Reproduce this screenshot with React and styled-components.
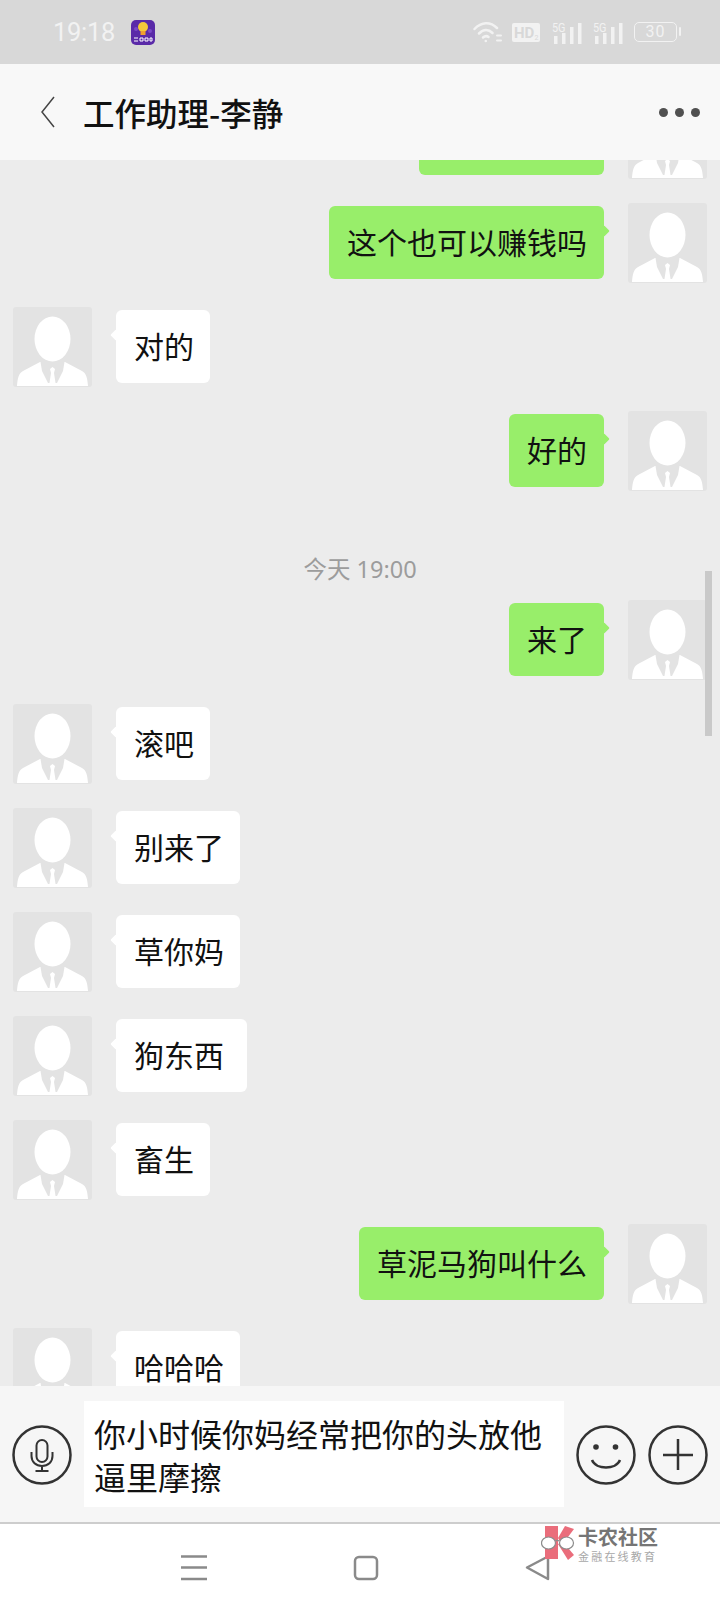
import React from "react";
import styled, { createGlobalStyle } from "styled-components";

const GlobalStyle = createGlobalStyle`
  html, body {
    margin: 0;
    padding: 0;
  }
  body {
    font-family: "Noto Sans CJK SC", "Noto Sans", sans-serif;
    color: #111;
  }
  * {
    box-sizing: border-box;
  }
`;

const Page = styled.div`
  width: 720px;
  height: 1612px;
  display: flex;
  flex-direction: column;
  overflow: hidden;
  background: #ececec;
`;

const StatusBar = styled.div`
  height: 64px;
  flex: none;
  display: flex;
  align-items: center;
  padding: 0 43px 0 53px;
  background: #d8d8d8;
  color: #f2f2f2;
`;

const Clock = styled.span`
  font-family: Roboto, sans-serif;
  font-size: 25.5px;
  letter-spacing: -0.3px;
  margin-right: 16px;
`;

const StatusIcons = styled.div`
  margin-left: auto;
  display: flex;
  align-items: center;
  gap: 10px;
`;

const Battery = styled.div`
  position: relative;
  width: 43px;
  height: 20px;
  border: 1.5px solid #f2f2f2;
  border-radius: 5px;
  font-family: Roboto, sans-serif;
  font-size: 16px;
  line-height: 17px;
  text-align: center;
  letter-spacing: 1px;

  &::after {
    content: "";
    position: absolute;
    right: -5px;
    top: 4px;
    width: 2px;
    height: 9px;
    border-radius: 1px;
    background: #f2f2f2;
  }
`;

const Header = styled.header`
  height: 96px;
  flex: none;
  display: flex;
  align-items: center;
  padding: 0 20px 0 40px;
  background: #f8f8f8;
  position: relative;
  z-index: 1;
`;

const Title = styled.h1`
  margin: 0 0 0 28px;
  font-size: 31.5px;
  font-weight: 500;
  color: #111;
`;

const Dots = styled.div`
  margin-left: auto;
  display: flex;
  gap: 7px;
`;

const Dot = styled.span`
  width: 9px;
  height: 9px;
  border-radius: 50%;
  background: #505050;
`;

const Chat = styled.main`
  flex: 1;
  min-height: 0;
  position: relative;
  overflow: hidden;
`;

const MessageList = styled.div`
  margin-top: -61px;
  display: flex;
  flex-direction: column;
`;

const Row = styled.div`
  display: flex;
  align-items: flex-start;
  justify-content: ${({ $mine }) => ($mine ? "flex-end" : "flex-start")};
  gap: 24px;
  padding: 0 13px;
  margin-bottom: 24px;
`;

const Avatar = styled.svg`
  width: 79px;
  height: 80px;
  flex: none;
  border-radius: 3px;
  background: #e3e3e3;
`;

const Bubble = styled.div`
  position: relative;
  margin-top: 3px;
  height: 73px;
  min-width: ${({ $minWidth }) => $minWidth || 0}px;
  padding: ${({ $mine }) => ($mine ? "0 17px 0 18px" : "0 16px 0 18px")};
  border-radius: 6px;
  font-size: 30px;
  line-height: 71px;
  white-space: nowrap;
  color: #111;
  background: ${({ $mine }) => ($mine ? "#98ee6a" : "#ffffff")};

  &::after {
    content: "";
    position: absolute;
    top: 21px;
    ${({ $mine }) => ($mine ? "right: -4px;" : "left: -4px;")}
    width: 8px;
    height: 8px;
    border-radius: 1px;
    transform: rotate(45deg);
    background: inherit;
  }
`;

const TimeLabel = styled.div`
  height: 85px;
  padding-top: 38px;
  font-size: 23.5px;
  line-height: 32px;
  text-align: center;
  color: #9c9c9c;
  font-family: "Noto Sans", "Noto Sans CJK SC", sans-serif;
`;

const Scrollbar = styled.div`
  position: absolute;
  top: 411px;
  right: 8px;
  width: 7px;
  height: 165px;
  background: #c9c9c9;
`;

const InputBar = styled.div`
  height: 138px;
  flex: none;
  display: flex;
  align-items: center;
  gap: 12px;
  padding: 2px 12px 0;
  background: #f6f6f6;
  border-bottom: 2px solid #cdcdcd;
  position: relative;
  z-index: 1;
`;

const RoundButton = styled.svg`
  width: 60px;
  height: 60px;
  flex: none;
  color: #333;
`;

const TextBox = styled.div`
  width: 480px;
  height: 106px;
  padding: 11px 10px 0;
  margin-top: -2px;
  background: #fff;
  font-size: 32px;
  line-height: 43px;
  color: #111;
`;

const NavBar = styled.nav`
  flex: none;
  height: 88px;
  position: relative;
  z-index: 1;
  display: grid;
  grid-template-columns: repeat(3, 172px);
  justify-content: center;
  justify-items: center;
  padding: 30px 0 0 12px;
  background: #fff;
`;

const NavIcon = styled.svg`
  width: 28px;
  height: 28px;
  color: #8a8a8a;
`;

const Watermark = styled.div`
  position: absolute;
  top: 1px;
  left: 541px;
  display: flex;
  align-items: flex-start;
  gap: 3px;
`;

const WatermarkText = styled.div`
  display: flex;
  flex-direction: column;
  padding-top: 1px;
`;

const WatermarkName = styled.span`
  font-size: 20px;
  line-height: 22px;
  font-weight: 700;
  letter-spacing: 0;
  color: #757575;
`;

const WatermarkSlogan = styled.span`
  margin-top: 1px;
  font-size: 11px;
  line-height: 14px;
  letter-spacing: 2.2px;
  color: #a8a8a8;
`;

const AvatarIcon = () => (
  <Avatar viewBox="0 0 79 80">
    <path fill="#fff" d="M4 79C4.500 71 6 66 10 64L27 55H52L69 64C73 66 74.500 71 75 79Z" />
    <path fill="#e3e3e3" d="M27 52L29 64L35 76H44L50 64L52 52Z" />
    <path fill="#fff" d="M37 62L39.500 60L42 62L41 66L43 79H36L38 66Z" />
    <ellipse fill="#fff" cx="39.500" cy="32" rx="18" ry="22.500" />
  </Avatar>
);

const Message = ({ mine, text, minWidth }) => (
  <Row $mine={mine}>
    {!mine && <AvatarIcon />}
    <Bubble $mine={mine} $minWidth={minWidth}>
      {text}
    </Bubble>
    {mine && <AvatarIcon />}
  </Row>
);

const AppBadge = () => (
  <svg width="24" height="25" viewBox="0 0 24 25">
    <rect width="24" height="25" rx="5" fill="#5a2aa8" />
    <circle cx="5" cy="9" r="2" fill="#7a48c8" />
    <circle cx="19" cy="11" r="2" fill="#7a48c8" />
    <circle cx="12" cy="7" r="5" fill="#f5c83a" />
    <rect x="9.500" y="11" width="5" height="4" fill="#f0a030" />
    <path d="M3 18h4M3 21h4M9 18h3v3H9zM14 18h3v3h-3zM19 18h2v3h-2z" stroke="#fff" strokeWidth="1" fill="none" />
  </svg>
);

const WifiIcon = () => (
  <svg width="29" height="22" viewBox="0 0 29 22" fill="none" stroke="#f2f2f2" strokeWidth="2.500" strokeLinecap="round">
    <path d="M1.500 8C8.500 0.500 17.500 0.500 24 7" />
    <path d="M6 12.500C10.500 8 15.500 8 19.500 12" />
    <path d="M10 16.500C12 14.800 14 14.800 15.500 16" />
    <circle cx="12.800" cy="20" r="1.300" fill="#f2f2f2" stroke="none" />
    <path d="M24 14.500h4M24 19.500h4" strokeWidth="2" />
  </svg>
);

const HdIcon = () => (
  <svg width="30" height="19" viewBox="0 0 30 19">
    <rect width="28" height="19" rx="2" fill="#f2f2f2" />
    <text x="2" y="15" fontSize="15" fontWeight="700" fontFamily="Roboto, sans-serif" fill="#d8d8d8">HD</text>
    <text x="22.500" y="17" fontSize="7" fontFamily="Roboto, sans-serif" fill="#d8d8d8">2</text>
  </svg>
);

const SignalIcon = () => (
  <svg width="31" height="23" viewBox="0 0 31 23">
    <text x="0" y="10.500" fontSize="13" fontFamily="Roboto, sans-serif" fill="#f2f2f2" textLength="13.500" lengthAdjust="spacingAndGlyphs">5G</text>
    <g fill="#f2f2f2">
      <rect x="2" y="15" width="3.500" height="8" />
      <rect x="10" y="12" width="3.500" height="11" />
      <rect x="18" y="6" width="3.500" height="17" />
      <rect x="26" y="2" width="3.500" height="21" />
    </g>
  </svg>
);

const WatermarkLogo = () => (
  <svg width="34" height="36" viewBox="0 0 34 36">
    <g fill="#ea6d7b">
      <path d="M4 1H17V34H4Z" />
      <path d="M17 13L24 1L33 4L21 20Z" />
      <path d="M17 19L22 17L33 30L27 35Z" />
    </g>
    <g fill="#fff" stroke="#8c8c8c" strokeWidth="1.200">
      <ellipse cx="7.500" cy="18" rx="7" ry="6" />
      <ellipse cx="25.500" cy="18" rx="7" ry="6" />
      <path d="M14.500 16C15.500 15 16.500 15 18.500 16" fill="none" />
    </g>
  </svg>
);

const messages = [
  { id: 1, mine: true, text: "", minWidth: 185 },
  { id: 2, mine: true, text: "这个也可以赚钱吗" },
  { id: 3, mine: false, text: "对的" },
  { id: 4, mine: true, text: "好的" },
  { id: 5, time: "今天 19:00" },
  { id: 6, mine: true, text: "来了" },
  { id: 7, mine: false, text: "滚吧" },
  { id: 8, mine: false, text: "别来了" },
  { id: 9, mine: false, text: "草你妈" },
  { id: 10, mine: false, text: "狗东西", minWidth: 131 },
  { id: 11, mine: false, text: "畜生" },
  { id: 12, mine: true, text: "草泥马狗叫什么" },
  { id: 13, mine: false, text: "哈哈哈" },
];

const App = () => (
  <Page>
    <GlobalStyle />
    <StatusBar>
      <Clock>19:18</Clock>
      <AppBadge />
      <StatusIcons>
        <WifiIcon />
        <HdIcon />
        <SignalIcon />
        <SignalIcon />
        <Battery>30</Battery>
      </StatusIcons>
    </StatusBar>
    <Header>
      <svg width="15" height="32" viewBox="0 0 15 32" fill="none" stroke="#444" strokeWidth="1.500">
        <path d="M14 1L2 16L14 31" />
      </svg>
      <Title>工作助理-李静</Title>
      <Dots>
        <Dot />
        <Dot />
        <Dot />
      </Dots>
    </Header>
    <Chat>
      <MessageList>
        {messages.map((m) =>
          m.time ? (
            <TimeLabel key={m.id}>{m.time}</TimeLabel>
          ) : (
            <Message key={m.id} mine={m.mine} text={m.text} minWidth={m.minWidth} />
          )
        )}
      </MessageList>
      <Scrollbar />
    </Chat>
    <InputBar>
      <RoundButton viewBox="0 0 60 60" fill="none" stroke="currentColor" strokeWidth="2.500">
        <circle cx="30" cy="30" r="28.500" />
        <rect x="24.500" y="15" width="11" height="22" rx="5.500" strokeWidth="2" />
        <path d="M19.500 27V31C19.500 37 24 41 30 41C36 41 40.500 37 40.500 31V27M30 41V46M23.500 46H36.500" strokeWidth="2" />
      </RoundButton>
      <TextBox>你小时候你妈经常把你的头放他逼里摩擦</TextBox>
      <RoundButton viewBox="0 0 60 60" fill="none" stroke="currentColor" strokeWidth="2.500">
        <circle cx="30" cy="30" r="28.500" />
        <circle cx="20" cy="22" r="2.800" fill="currentColor" stroke="none" />
        <circle cx="39.500" cy="22" r="2.800" fill="currentColor" stroke="none" />
        <path d="M16 35C20 45 40 45 44 35" />
      </RoundButton>
      <RoundButton viewBox="0 0 60 60" fill="none" stroke="currentColor" strokeWidth="2.500">
        <circle cx="30" cy="30" r="28.500" />
        <path d="M30 14V45M15 30H45" />
      </RoundButton>
    </InputBar>
    <NavBar>
      <NavIcon viewBox="0 0 28 28" fill="none" stroke="currentColor" strokeWidth="2.500">
        <path d="M1 2.500H27M1 13.500H27M1 25H27" />
      </NavIcon>
      <NavIcon viewBox="0 0 28 28" fill="none" stroke="currentColor" strokeWidth="2.500">
        <rect x="3" y="3" width="22" height="22" rx="4" />
      </NavIcon>
      <NavIcon viewBox="0 0 28 28" fill="none" stroke="currentColor" strokeWidth="2.500" strokeLinejoin="round">
        <path d="M24 2.500V25L3 13.500Z" />
      </NavIcon>
      <Watermark>
        <WatermarkLogo />
        <WatermarkText>
          <WatermarkName>卡农社区</WatermarkName>
          <WatermarkSlogan>金融在线教育</WatermarkSlogan>
        </WatermarkText>
      </Watermark>
    </NavBar>
  </Page>
);

export default App;
